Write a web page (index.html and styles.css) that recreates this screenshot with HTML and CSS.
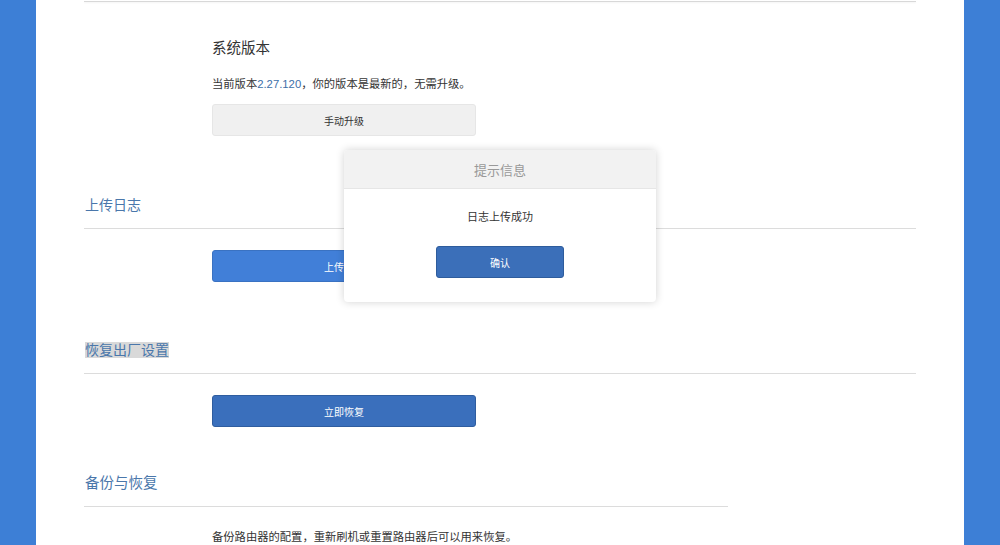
FILE: index.html
```html
<!DOCTYPE html>
<html lang="zh-CN">
<head>
<meta charset="utf-8">
<title>系统设置</title>
<link rel="stylesheet" href="styles.css">
</head>
<body>
<div class="page">
  <div class="side"></div>
  <div class="main">
    <div class="topline"></div>
    <div class="sys">
      <div class="sys-title">系统版本</div>
      <div class="desc">当前版本<span class="ver">2.27.120</span>，你的版本是最新的，无需升级。</div>
      <div class="btn btn-gray">手动升级</div>
    </div>

    <div class="sec-head first">上传日志</div>
    <div class="indent"><div class="btn btn-light">上传日志</div></div>

    <div class="sec-head second"><span class="sel">恢复出厂设置</span></div>
    <div class="indent"><div class="btn btn-dark">立即恢复</div></div>

    <div class="sec-head short">备份与恢复</div>
    <div class="indent"><div class="desc">备份路由器的配置，重新刷机或重置路由器后可以用来恢复。</div></div>

    <div class="modal">
      <div class="modal-head">提示信息</div>
      <div class="modal-body">
        <div class="modal-msg">日志上传成功</div>
        <div class="btn btn-ok">确认</div>
      </div>
    </div>
  </div>
  <div class="side"></div>
</div>
</body>
</html>
```

FILE: styles.css
```css
html, body {
  margin: 0;
  padding: 0;
  height: 100%;
  overflow: hidden;
}
body {
  font-family: "Liberation Sans", "Noto Sans CJK SC", sans-serif;
  color: #333;
}
.page {
  display: flex;
  height: 545px;
}
.side {
  width: 36px;
  background: #3d7fd6;
  flex: none;
}
.main {
  flex: 1;
  background: #fff;
  padding: 0 48px;
  position: relative;
}
.topline {
  height: 1px;
  margin-top: 1px;
  background: #d8d8d8;
  box-shadow: 0 1px 2px rgba(0,0,0,0.06);
}
.sys {
  padding-left: 128px;
}
.sys-title {
  font-size: 14.5px;
  line-height: 20px;
  margin-top: 36px;
  color: #333;
}
.desc {
  font-size: 11.3px;
  line-height: 18px;
  margin-top: 17px;
  color: #333;
}
.ver {
  color: #3d6fa8;
}
.btn {
  width: 264px;
  height: 32px;
  box-sizing: border-box;
  border-radius: 3px;
  display: flex;
  align-items: center;
  justify-content: center;
  font-size: 10px;
}
.sys .btn {
  margin-top: 11px;
}
.btn-gray {
  background: #f0f0f0;
  border: 1px solid #e6e6e6;
  color: #333;
}
.btn-light {
  background: #417fd8;
  border: 1px solid #3a72c2;
  color: #fff;
}
.btn-dark {
  background: #3a6fbc;
  border: 1px solid #2f5d9f;
  color: #fff;
}
.sec-head {
  font-size: 14px;
  line-height: 20px;
  color: #4a77ab;
  padding-left: 1px;
  padding-bottom: 13px;
  border-bottom: 1px solid #dcdcdc;
}
.sec-head.first {
  margin-top: 59px;
}
.sec-head.second {
  margin-top: 58px;
}
.sec-head.short {
  margin-top: 46px;
  width: 643px;
  font-size: 14.5px;
}
.sel {
  background: #d9d9d9;
}
.indent {
  padding-left: 128px;
  margin-top: 21px;
}
.indent .desc {
  margin-top: 0;
}
.modal {
  position: absolute;
  left: 308px;
  top: 150px;
  width: 312px;
  background: #fff;
  border-radius: 4px;
  box-shadow: 0 0 8px rgba(0,0,0,0.18);
  overflow: hidden;
}
.modal-head {
  height: 39px;
  background: #f2f2f2;
  border-bottom: 1px solid #e6e6e6;
  box-sizing: border-box;
  display: flex;
  align-items: center;
  justify-content: center;
  font-size: 13px;
  color: #999;
}
.modal-body {
  padding: 19px 0 24px;
  display: flex;
  flex-direction: column;
  align-items: center;
}
.modal-msg {
  font-size: 11px;
  line-height: 18px;
  color: #333;
}
.btn-ok {
  width: 128px;
  margin-top: 20px;
  background: #3b6fb9;
  border: 1px solid #2e5c9c;
  color: #fff;
}
```
